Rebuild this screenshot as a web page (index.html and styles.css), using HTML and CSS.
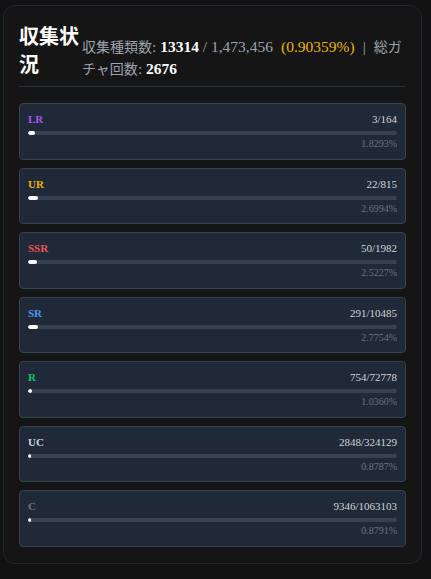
FILE: index.html
```html
<!DOCTYPE html>
<html lang="ja">
<head>
<meta charset="utf-8">
<link rel="stylesheet" href="styles.css">
</head>
<body>
<section class="panel">
  <header class="head">
    <h2 class="title">収集状況</h2>
    <p class="stats">収集種類数<span class="lat">: <b>13314</b> / 1,473,456</span><span class="lat ratio">(0.90359%)</span><span class="lat sep">|</span>総ガチャ回数<span class="lat">: <b>2676</b></span></p>
  </header>
  <div class="list">
    <div class="item">
      <div class="row"><span class="rank lr">LR</span><span class="count">3/164</span></div>
      <div class="track"><div class="fill" style="width:1.8293%"></div></div>
      <div class="pct">1.8293%</div>
    </div>
    <div class="item">
      <div class="row"><span class="rank ur">UR</span><span class="count">22/815</span></div>
      <div class="track"><div class="fill" style="width:2.6994%"></div></div>
      <div class="pct">2.6994%</div>
    </div>
    <div class="item">
      <div class="row"><span class="rank ssr">SSR</span><span class="count">50/1982</span></div>
      <div class="track"><div class="fill" style="width:2.5227%"></div></div>
      <div class="pct">2.5227%</div>
    </div>
    <div class="item">
      <div class="row"><span class="rank sr">SR</span><span class="count">291/10485</span></div>
      <div class="track"><div class="fill" style="width:2.7754%"></div></div>
      <div class="pct">2.7754%</div>
    </div>
    <div class="item">
      <div class="row"><span class="rank r">R</span><span class="count">754/72778</span></div>
      <div class="track"><div class="fill" style="width:1.0360%"></div></div>
      <div class="pct">1.0360%</div>
    </div>
    <div class="item">
      <div class="row"><span class="rank uc">UC</span><span class="count">2848/324129</span></div>
      <div class="track"><div class="fill" style="width:0.8787%"></div></div>
      <div class="pct">0.8787%</div>
    </div>
    <div class="item">
      <div class="row"><span class="rank c">C</span><span class="count">9346/1063103</span></div>
      <div class="track"><div class="fill" style="width:0.8791%"></div></div>
      <div class="pct">0.8791%</div>
    </div>
  </div>
</section>
</body>
</html>
```

FILE: styles.css
```css
html, body {
  margin: 0;
  background: #121212;
}
body {
  padding: 5px 9px 16px 3px;
  font-family: "Liberation Serif", "Noto Sans CJK JP", serif;
  color: #e5e7eb;
}
.panel {
  background: #151515;
  border: 1px solid #1f2733;
  border-radius: 12px;
  padding: 16px 15px;
}
.head {
  display: flex;
  align-items: flex-end;
  gap: 3px;
  padding-bottom: 8px;
  border-bottom: 1px solid #243040;
}
.title {
  margin: 0;
  flex: 0 0 60px;
  font-size: 20px;
  line-height: 28px;
  font-weight: 700;
  color: #ffffff;
  font-family: "Noto Sans CJK JP", sans-serif;
}
.stats {
  margin: 0 0 -2px;
  flex: 1 1 auto;
  font-size: 14px;
  line-height: 21px;
  color: #9ca3af;
}
.lat {
  font-size: 15.5px;
}
.stats b {
  color: #ffffff;
  font-weight: 700;
}
.ratio {
  color: #eab308;
  margin-left: 8px;
}
.sep {
  margin: 0 8px;
}
.list {
  margin-top: 16px;
  display: flex;
  flex-direction: column;
  gap: 8px;
}
.item {
  background: #1f2937;
  border: 1px solid #374151;
  border-radius: 4px;
  padding: 8px 8px;
}
.row {
  display: flex;
  justify-content: space-between;
  align-items: baseline;
  font-size: 11px;
  line-height: 15px;
}
.rank {
  font-weight: 700;
  font-size: 11px;
}
.count {
  color: #d1d5db;
}
.lr { color: #a855f7; }
.ur { color: #eab308; }
.ssr { color: #ef5350; }
.sr { color: #4f95ee; }
.r { color: #10c070; }
.uc { color: #d1d5db; }
.c { color: #6b7280; }
.track {
  margin-top: 4px;
  height: 4px;
  background: #374151;
  border-radius: 2px;
  overflow: hidden;
}
.fill {
  height: 100%;
  min-width: 3px;
  background: #ffffff;
  border-radius: 2px;
}
.pct {
  margin-top: 2px;
  text-align: right;
  font-size: 10px;
  line-height: 13.5px;
  color: #6b7280;
}
```
